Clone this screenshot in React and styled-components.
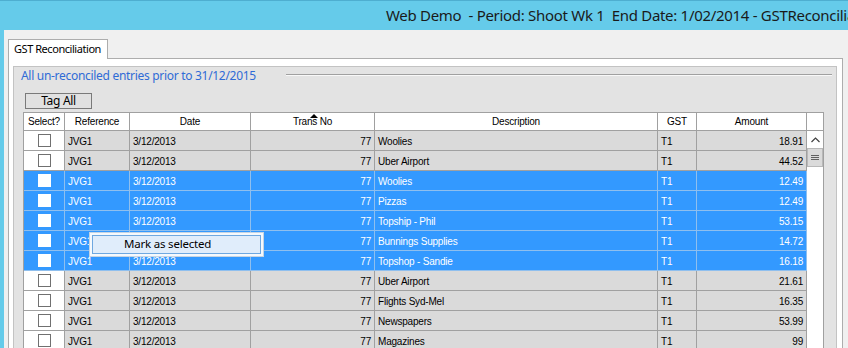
import styled, { createGlobalStyle } from 'styled-components';

const GlobalStyle = createGlobalStyle`
  html, body { margin: 0; padding: 0; background: #f0f0f0; }
  body { font-family: "Noto Sans", "Open Sans", sans-serif; }
`;

const COLS = '41px 65px 121px 124px 283px 39px 110px';

const rows = [
  { desc: 'Woolies', amt: '18.91' },
  { desc: 'Uber Airport', amt: '44.52' },
  { desc: 'Woolies', amt: '12.49', sel: true },
  { desc: 'Pizzas', amt: '12.49', sel: true },
  { desc: 'Topship - Phil', amt: '53.15', sel: true },
  { desc: 'Bunnings Supplies', amt: '14.72', sel: true },
  { desc: 'Topshop - Sandie', amt: '16.18', sel: true },
  { desc: 'Uber Airport', amt: '21.61' },
  { desc: 'Flights Syd-Mel', amt: '16.35' },
  { desc: 'Newspapers', amt: '53.99' },
  { desc: 'Magazines', amt: '99' },
];

const Window = styled.div`
  position: relative;
  width: 848px;
  height: 348px;
  overflow: hidden;
  background: #f0f0f0;
  display: flex;
  flex-direction: column;
`;

const TitleBar = styled.div`
  flex: none;
  height: 30px;
  box-sizing: border-box;
  background: #65cbea;
  border-top: 1px solid #4eaed0;
  padding-left: 386px;
  line-height: 28px;
  font-size: 15px;
  letter-spacing: -0.3px;
  color: #1a1a1a;
  white-space: nowrap;
  overflow: hidden;
`;

const Body = styled.div`
  flex: 1;
  display: flex;
  flex-direction: column;
  border-left: 4px solid #65cbea;
  padding: 9px 5px 0 4px;
  min-height: 0;
`;

const TabStrip = styled.div`
  display: flex;
  flex: none;
`;

const Tab = styled.div`
  position: relative;
  z-index: 1;
  height: 20px;
  box-sizing: border-box;
  margin-bottom: -1px;
  padding: 0 6px 0 5px;
  background: #fff;
  border: 1px solid #adadad;
  border-bottom: none;
  font-size: 11px;
  letter-spacing: -0.45px;
  line-height: 18px;
  color: #000;
`;

const Panel = styled.div`
  flex: 1;
  display: flex;
  flex-direction: column;
  background: #fff;
  border: 1px solid #adadad;
  border-bottom: none;
  padding: 7px 5px 0 4px;
  min-height: 0;
`;

const GroupBox = styled.div`
  flex: 1;
  background: #e3e3e3;
  border: 1px solid #c3c3c3;
  border-bottom: none;
  display: flex;
  flex-direction: column;
`;

const GroupHeader = styled.div`
  display: flex;
  align-items: center;
  height: 16px;
  padding-left: 7px;
`;

const GroupTitle = styled.span`
  font-size: 12px;
  letter-spacing: -0.3px;
  color: #2f6bd6;
  white-space: nowrap;
`;

const EtchedLine = styled.div`
  flex: 1;
  margin: 0 4px 0 30px;
  border-top: 1px solid #a0a0a0;
  border-bottom: 1px solid #f8f8f8;
`;

const Button = styled.button`
  display: block;
  margin: 10px 0 0 11px;
  width: 67px;
  height: 16px;
  padding: 0;
  box-sizing: border-box;
  background: #e1e1e1;
  border: 1px solid #7a7a7a;
  font-family: "Noto Sans", sans-serif;
  font-size: 12px;
  letter-spacing: -0.3px;
  line-height: 14px;
  color: #000;
`;

const Grid = styled.div`
  margin: 3px 0 0 9px;
  width: 801px;
  box-sizing: border-box;
  border: 1px solid #a0a0a0;
  border-bottom: none;
  background: #fff;
  font-family: "Liberation Sans", Arial, sans-serif;
  font-size: 10px;
  letter-spacing: -0.2px;
  flex: 1;
  display: flex;
  flex-direction: column;
`;

const HeaderRow = styled.div`
  display: grid;
  grid-template-columns: ${COLS} 16px;
  height: 17px;
  border-bottom: 1px solid #a0a0a0;
`;

const HeadCell = styled.div`
  position: relative;
  text-align: center;
  line-height: 17px;
  color: #000;
  border-right: ${({ $last }) => ($last ? 'none' : '1px solid #a0a0a0')};
`;

const SortMark = styled.svg`
  position: absolute;
  left: 59px;
  top: 1px;
`;

const BodyArea = styled.div`
  display: flex;
  flex: 1;
`;

const RowList = styled.div`
  width: 783px;
`;

const Row = styled.div`
  display: grid;
  grid-template-columns: ${COLS};
  height: 20px;
  box-sizing: border-box;
  border-bottom: 1px solid ${({ $sel }) => ($sel ? '#8fbfee' : '#a0a0a0')};
  background: ${({ $sel }) => ($sel ? '#3399ff' : '#dadada')};
  color: ${({ $sel }) => ($sel ? '#fff' : '#000')};
`;

const Cell = styled.div`
  padding: 3px 3px 0;
  line-height: 16px;
  white-space: nowrap;
  overflow: hidden;
  text-align: ${({ $right }) => ($right ? 'right' : 'left')};
  border-right: 1px solid ${({ $sel }) => ($sel ? '#8fbfee' : '#a0a0a0')};
`;

const SelectCell = styled.div`
  display: flex;
  align-items: center;
  justify-content: center;
  background: ${({ $sel }) => ($sel ? '#3399ff' : '#fff')};
  border-right: 1px solid ${({ $sel }) => ($sel ? '#8fbfee' : '#a0a0a0')};
`;

const Check = styled.span`
  width: 13px;
  height: 13px;
  box-sizing: border-box;
  background: #fff;
  border: 1px solid ${({ $sel }) => ($sel ? '#fff' : '#707070')};
`;

const ScrollBar = styled.div`
  width: 16px;
  background: #fff;
  display: flex;
  flex-direction: column;
`;

const ScrollButton = styled.div`
  height: 17px;
  display: flex;
  align-items: center;
  justify-content: center;
  background: #fff;
`;

const Thumb = styled.div`
  height: 19px;
  box-sizing: border-box;
  background: #dadada;
  border: 1px solid #b8b8b8;
  display: flex;
  align-items: center;
  justify-content: center;
`;

const Menu = styled.div`
  position: absolute;
  left: 89px;
  top: 232px;
  width: 175px;
  height: 25px;
  box-sizing: border-box;
  padding: 2px;
  background: #f5f9fd;
  border: 1px solid #c6d4e2;
`;

const MenuItem = styled.div`
  height: 19px;
  box-sizing: border-box;
  padding-left: 31px;
  background: #e0edfb;
  border: 1px solid #6fa8e0;
  font-size: 11.5px;
  letter-spacing: -0.2px;
  line-height: 16px;
  color: #000;
`;

export default function App() {
  return (
    <Window>
      <GlobalStyle />
      <TitleBar>Web Demo&nbsp; - Period: Shoot Wk 1&nbsp; End Date: 1/02/2014 - GSTReconciliation</TitleBar>
      <Body>
        <TabStrip>
          <Tab>GST Reconciliation</Tab>
        </TabStrip>
        <Panel>
          <GroupBox>
            <GroupHeader>
              <GroupTitle>All un-reconciled entries prior to 31/12/2015</GroupTitle>
              <EtchedLine />
            </GroupHeader>
            <Button>Tag All</Button>
            <Grid>
              <HeaderRow>
                <HeadCell>Select?</HeadCell>
                <HeadCell>Reference</HeadCell>
                <HeadCell>Date</HeadCell>
                <HeadCell>
                  Trans No
                  <SortMark width="8" height="5" viewBox="0 0 8 5">
                    <path d="M4 0 L8 4 L0 4 Z" fill="#000" />
                  </SortMark>
                </HeadCell>
                <HeadCell>Description</HeadCell>
                <HeadCell>GST</HeadCell>
                <HeadCell>Amount</HeadCell>
                <HeadCell $last />
              </HeaderRow>
              <BodyArea>
                <RowList>
                  {rows.map((r, i) => (
                    <Row key={i} $sel={r.sel}>
                      <SelectCell $sel={r.sel}>
                        <Check $sel={r.sel} />
                      </SelectCell>
                      <Cell $sel={r.sel}>JVG1</Cell>
                      <Cell $sel={r.sel}>3/12/2013</Cell>
                      <Cell $sel={r.sel} $right>77</Cell>
                      <Cell $sel={r.sel}>{r.desc}</Cell>
                      <Cell $sel={r.sel}>T1</Cell>
                      <Cell $sel={r.sel} $right>{r.amt}</Cell>
                    </Row>
                  ))}
                </RowList>
                <ScrollBar>
                  <ScrollButton>
                    <svg width="9" height="6" viewBox="0 0 9 6">
                      <path d="M0.5 5 L4.5 1 L8.5 5" stroke="#404040" strokeWidth="1.2" fill="none" />
                    </svg>
                  </ScrollButton>
                  <Thumb>
                    <svg width="8" height="7" viewBox="0 0 8 7">
                      <path d="M0 1.5 H8 M0 3.5 H8 M0 5.5 H8" stroke="#606060" strokeWidth="1" />
                    </svg>
                  </Thumb>
                </ScrollBar>
              </BodyArea>
            </Grid>
          </GroupBox>
        </Panel>
      </Body>
      <Menu>
        <MenuItem>Mark as selected</MenuItem>
      </Menu>
    </Window>
  );
}
